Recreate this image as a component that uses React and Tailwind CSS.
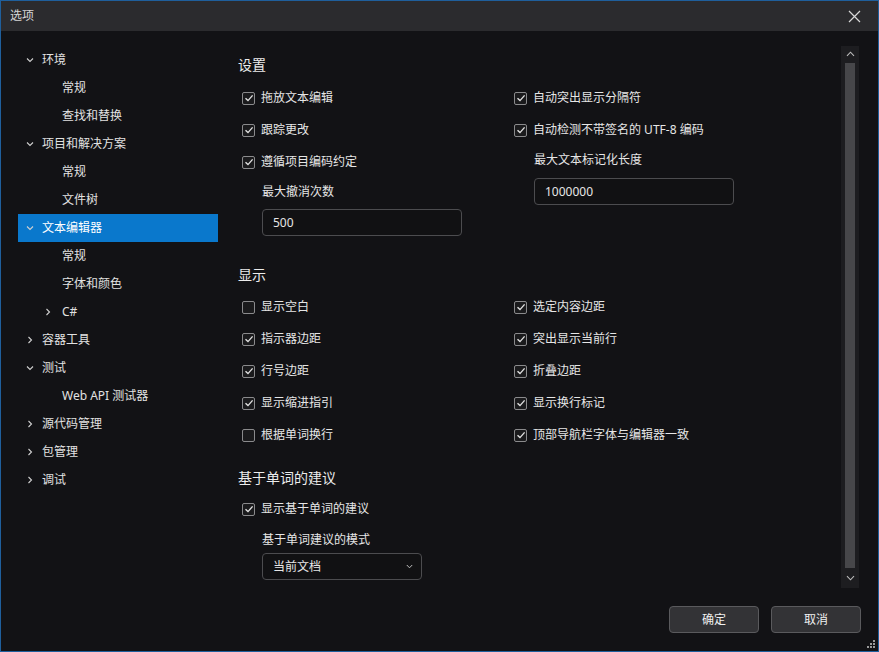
import React from "react";

const tree = [
  { label: "环境", level: 0, open: true },
  { label: "常规", level: 1 },
  { label: "查找和替换", level: 1 },
  { label: "项目和解决方案", level: 0, open: true },
  { label: "常规", level: 1 },
  { label: "文件树", level: 1 },
  { label: "文本编辑器", level: 0, open: true, selected: true },
  { label: "常规", level: 1 },
  { label: "字体和颜色", level: 1 },
  { label: "C#", level: 1, open: false },
  { label: "容器工具", level: 0, open: false },
  { label: "测试", level: 0, open: true },
  { label: "Web API 测试器", level: 1 },
  { label: "源代码管理", level: 0, open: false },
  { label: "包管理", level: 0, open: false },
  { label: "调试", level: 0, open: false },
];

function Chevron({ open }) {
  return (
    <svg width="8" height="8" viewBox="0 0 8 8" className="text-[#d0d0d0]">
      {open ? (
        <path d="M1 2.5 L4 5.5 L7 2.5" fill="none" stroke="currentColor" strokeWidth="1.1" />
      ) : (
        <path d="M2.5 1 L5.5 4 L2.5 7" fill="none" stroke="currentColor" strokeWidth="1.1" />
      )}
    </svg>
  );
}

function TreeRow({ item }) {
  const hasChevron = item.open !== undefined;
  return (
    <div
      className={
        "flex h-[28px] items-center text-[12px] " +
        (item.selected ? "bg-[#0a78cc] text-white" : "text-[#e2e2e2]")
      }
    >
      {item.level === 0 ? (
        <div className="flex w-[24px] items-center pl-[8px]">
          <Chevron open={item.open} />
        </div>
      ) : (
        <div className="flex w-[44px] items-center pl-[26px]">
          {hasChevron && <Chevron open={item.open} />}
        </div>
      )}
      <span>{item.label}</span>
    </div>
  );
}

function Check({ checked, label }) {
  return (
    <div className="flex h-[32px] items-center gap-[6px] pl-[4px] text-[12px] text-[#e6e6e6]">
      <div className="flex h-[13px] w-[13px] items-center justify-center rounded-[2px] border border-[#8a8a8c] bg-[#1a1a1c]">
        {checked && (
          <svg width="10" height="10" viewBox="0 0 10 10">
            <path d="M1.5 5.2 L4 7.6 L8.6 2.4" fill="none" stroke="#e0e0e0" strokeWidth="1.4" />
          </svg>
        )}
      </div>
      <span>{label}</span>
    </div>
  );
}

function Heading({ children }) {
  return (
    <div className="flex h-[32px] items-center text-[14px] text-[#ececec]">{children}</div>
  );
}

function Field({ label, value, mt }) {
  return (
    <div className="pl-[24px]">
      <div className="flex h-[28px] items-center text-[12px] text-[#e6e6e6]">{label}</div>
      <div
        className={
          "flex h-[27px] w-[200px] items-center rounded-[4px] border border-[#4c4c4f] bg-[#111113] pl-[10px] text-[12px] text-[#e6e6e6] " +
          mt
        }
      >
        {value}
      </div>
    </div>
  );
}

export default function App() {
  return (
    <div className="flex h-[652px] w-[879px] flex-col border border-[#1f5f9c] bg-[#121215] font-['Noto_Sans','Noto_Sans_CJK_SC',sans-serif]">
      {/* title bar */}
      <div className="flex h-[30px] items-center justify-between bg-[#2b2b2e] pl-[9px] pr-[17px]">
        <span className="text-[12px] text-[#d6d6d6]">选项</span>
        <svg width="13" height="13" viewBox="0 0 13 13">
          <path d="M1 1 L12 12 M12 1 L1 12" stroke="#d8d8d8" strokeWidth="1.2" />
        </svg>
      </div>

      {/* main */}
      <div className="flex h-[557px] pt-[15px]">
        <div className="w-[217px] pl-[17px]">
          {tree.map((item, i) => (
            <TreeRow key={i} item={item} />
          ))}
        </div>

        <div className="flex-1 pl-[20px] pt-[2px]">
          <Heading>设置</Heading>
          <div className="mt-[2px] flex">
            <div className="w-[272px]">
              <Check checked label="拖放文本编辑" />
              <Check checked label="跟踪更改" />
              <Check checked label="遵循项目编码约定" />
              <Field label="最大撤消次数" value="500" mt="mt-[3px]" />
            </div>
            <div>
              <Check checked label="自动突出显示分隔符" />
              <Check checked label="自动检测不带签名的 UTF-8 编码" />
              <Field label="最大文本标记化长度" value="1000000" mt="mt-[4px]" />
            </div>
          </div>

          <div className="mt-[22px]">
            <Heading>显示</Heading>
          </div>
          <div className="mt-[1px] flex">
            <div className="w-[272px]">
              <Check label="显示空白" />
              <Check checked label="指示器边距" />
              <Check checked label="行号边距" />
              <Check checked label="显示缩进指引" />
              <Check label="根据单词换行" />
            </div>
            <div>
              <Check checked label="选定内容边距" />
              <Check checked label="突出显示当前行" />
              <Check checked label="折叠边距" />
              <Check checked label="显示换行标记" />
              <Check checked label="顶部导航栏字体与编辑器一致" />
            </div>
          </div>

          <div className="mt-[10px]">
            <Heading>基于单词的建议</Heading>
          </div>
          <Check checked label="显示基于单词的建议" />
          <div className="pl-[24px]">
            <div className="mt-[2px] flex h-[26px] items-center text-[12px] text-[#e6e6e6]">
              基于单词建议的模式
            </div>
            <div className="flex h-[27px] w-[160px] items-center justify-between rounded-[4px] border border-[#4c4c4f] bg-[#111113] pl-[10px] pr-[8px] text-[12px] text-[#e6e6e6]">
              <span>当前文档</span>
              <svg width="7" height="5" viewBox="0 0 7 5">
                <path d="M0.8 1 L3.5 3.8 L6.2 1" fill="none" stroke="#bdbdbd" strokeWidth="1" />
              </svg>
            </div>
          </div>
        </div>

        {/* scrollbar */}
        <div className="mr-[19px] flex h-full w-[18px] flex-col items-center bg-[#1d1d20]">
          <div className="flex h-[16px] items-center justify-center">
            <svg width="9" height="6" viewBox="0 0 9 6">
              <path d="M1 4.8 L4.5 1.2 L8 4.8" fill="none" stroke="#bdbdbd" strokeWidth="1.1" />
            </svg>
          </div>
          <div className="mt-[1px] w-[10px] flex-1 bg-[#47474a]" />
          <div className="flex h-[20px] items-center justify-center">
            <svg width="9" height="6" viewBox="0 0 9 6">
              <path d="M1 1.2 L4.5 4.8 L8 1.2" fill="none" stroke="#bdbdbd" strokeWidth="1.1" />
            </svg>
          </div>
        </div>
      </div>

      {/* footer */}
      <div className="relative flex flex-1 justify-end gap-[12px] pr-[17px] pt-[18px]">
        <button className="h-[27px] w-[90px] rounded-[4px] border border-[#5a5a5d] bg-[#333336] text-[12px] text-[#f0f0f0]">
          确定
        </button>
        <button className="h-[27px] w-[90px] rounded-[4px] border border-[#5a5a5d] bg-[#333336] text-[12px] text-[#f0f0f0]">
          取消
        </button>
        <svg className="absolute bottom-[2px] right-[2px]" width="10" height="10" viewBox="0 0 10 10">
          <g fill="#9a9a9a">
            <rect x="7" y="1" width="2" height="2" />
            <rect x="4" y="4" width="2" height="2" />
            <rect x="7" y="4" width="2" height="2" />
            <rect x="1" y="7" width="2" height="2" />
            <rect x="4" y="7" width="2" height="2" />
            <rect x="7" y="7" width="2" height="2" />
          </g>
        </svg>
      </div>
    </div>
  );
}
